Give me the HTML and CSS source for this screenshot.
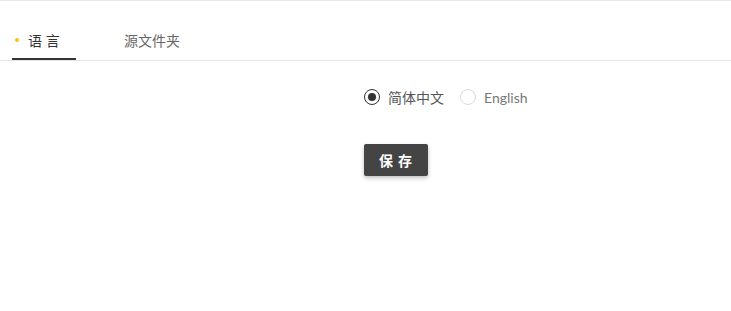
FILE: index.html
```html
<!DOCTYPE html>
<html>
<head>
<meta charset="utf-8">
<link rel="stylesheet" href="styles.css">
</head>
<body>
<div class="page">
  <div class="tabs">
    <div class="tab active"><span class="dot"></span>语 言</div>
    <div class="tab">源文件夹</div>
  </div>
  <div class="content">
    <div class="radios">
      <label class="radio"><span class="circle checked"></span>简体中文</label>
      <label class="radio"><span class="circle"></span><span class="en">English</span></label>
    </div>
    <button class="save">保 存</button>
  </div>
</div>
</body>
</html>
```
FILE: styles.css
```css
* { box-sizing: border-box; }
body {
  margin: 0;
  font-family: "Noto Sans", "Noto Sans CJK SC", sans-serif;
  background: #fff;
  color: #555;
}
.page {
  border-top: 1px solid #e8e8e8;
  width: 731px;
  height: 311px;
}
.tabs {
  display: flex;
  padding-left: 12px;
  height: 60px;
  border-bottom: 1px solid #e6e6e6;
  align-items: flex-end;
}
.tab {
  height: 59px;
  display: flex;
  align-items: center;
  padding-top: 19px;
  font-size: 14px;
  color: #666;
  width: 112px;
  position: relative;
}
.tab.active {
  width: 64px;
  margin-right: 48px;
  color: #333;
  border-bottom: 2px solid #333;
  padding-top: 21px;
  padding-left: 3px;
}
.dot {
  width: 4px;
  height: 4px;
  border-radius: 50%;
  background: #f5c518;
  margin-right: 9px;
}
.content {
  padding-left: 364px;
  padding-top: 28px;
}
.radios {
  display: flex;
  align-items: center;
  height: 16px;
  font-size: 14px;
  color: #555;
}
.radio {
  display: flex;
  align-items: center;
  margin-right: 16px;
}
.en {
  font-family: "Lato", sans-serif;
  font-size: 14px;
  color: #777;
}
.circle {
  width: 16px;
  height: 16px;
  border-radius: 50%;
  border: 1px solid #d9d9d9;
  margin-right: 8px;
  position: relative;
}
.circle.checked {
  border-color: #333;
}
.circle.checked::after {
  content: "";
  position: absolute;
  left: 3px;
  top: 3px;
  width: 8px;
  height: 8px;
  border-radius: 50%;
  background: #333;
}
.save {
  margin-top: 39px;
  width: 64px;
  height: 32px;
  border: none;
  border-radius: 2px;
  background: #444;
  color: #fff;
  font-family: "Noto Sans CJK SC", sans-serif;
  font-size: 14px;
  font-weight: bold;
  letter-spacing: 1px;
  box-shadow: 0 2px 4px rgba(0,0,0,0.25);
  display: block;
}
```
